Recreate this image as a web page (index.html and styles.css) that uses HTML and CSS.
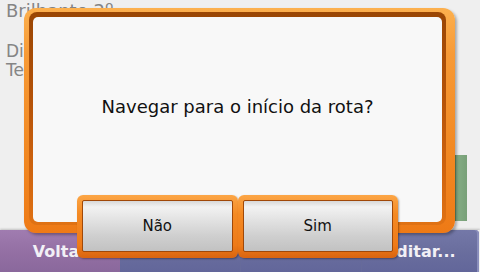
FILE: index.html
```html
<!DOCTYPE html>
<html>
<head>
<meta charset="utf-8">
<link rel="stylesheet" href="styles.css">
</head>
<body>
<div class="page">
  <div class="content">
    <div class="texts">
      <div class="title">Brilhante 2º</div>
      <div class="line">Distância</div>
      <div class="line">Tempo</div>
    </div>
    <div class="side">
      <div class="scroll"></div>
    </div>
  </div>
  <div class="bar">
    <div class="seg back">Voltar</div>
    <div class="seg blue first"></div>
    <div class="seg blue"></div>
    <div class="seg blue last">Editar...</div>
  </div>
</div>

<div class="dialog">
  <div class="frame">
    <div class="bevel">
      <div class="panel">
        <div class="msg">Navegar para o início da rota?</div>
      </div>
    </div>
  </div>
  <div class="buttons">
    <div class="btn"><div class="face">Não</div></div>
    <div class="btn"><div class="face">Sim</div></div>
  </div>
</div>
</body>
</html>
```

FILE: styles.css
```css
html, body {
  margin: 0;
  padding: 0;
}
body {
  width: 480px;
  height: 272px;
  overflow: hidden;
  background: #efefef;
  font-family: "DejaVu Sans", "Liberation Sans", sans-serif;
  position: relative;
}
.page {
  width: 480px;
  height: 272px;
  display: flex;
  flex-direction: column;
}
.content {
  flex: 1;
  display: flex;
}
.texts {
  flex: 1;
  padding: 0 0 0 6px;
  color: #858585;
}
.title {
  font-size: 18px;
  line-height: 22px;
}
.line {
  font-size: 17px;
  line-height: 19px;
}
.title + .line {
  margin-top: 20px;
}
.side {
  width: 25px;
}
.scroll {
  margin-top: 155px;
  width: 11px;
  height: 66px;
  background: linear-gradient(to right, #86ae86, #78a078);
  border-left: 1px solid #6a926a;
}
.bar {
  height: 42px;
  display: flex;
  box-shadow: 0 -1px 2px rgba(0,0,0,0.2);
}
.seg {
  display: flex;
  align-items: center;
  justify-content: center;
  color: #f2f0f6;
  font-weight: bold;
  font-size: 16px;
}
.back {
  width: 120px;
  background: linear-gradient(#a07cb0, #9470a4 50%, #8a689c);
}
.blue {
  width: 120px;
  background: linear-gradient(#7478a8, #6a6e9e 50%, #62669a);
  border-left: 1px solid #666a9a;
}
.first {
  border-left: none;
}
.last {
  width: 117px;
  border-radius: 0 4px 0 0;
  box-shadow: inset -2px 0 0 #8a8ebc;
}

.dialog {
  position: absolute;
  left: 24px;
  top: 8px;
  width: 431px;
}
.frame {
  height: 225px;
  box-sizing: border-box;
  padding: 4px 9px 8px 5px;
  border-radius: 12px;
  background: linear-gradient(#fcb04e, #f79a36 20%, #f28a24 60%, #ee7a16);
  box-shadow: 2px 2px 3px rgba(0,0,0,0.3);
}
.bevel {
  height: 100%;
  box-sizing: border-box;
  padding: 5px 4px 3px 4px;
  border-radius: 8px;
  background: linear-gradient(#9a4604, #b45208 40%, #d0640e 75%, #e07214);
}
.panel {
  height: 100%;
  box-sizing: border-box;
  background: #f8f8f8;
  border-radius: 5px;
  display: flex;
  align-items: center;
  justify-content: center;
  padding-bottom: 27px;
}
.msg {
  font-size: 18px;
  color: #111;
}
.buttons {
  display: flex;
  margin: -38px 0 0 53px;
  width: 321px;
  height: 63px;
}
.btn {
  flex: 1;
  box-sizing: border-box;
  padding: 5px 5px 6px 5px;
  border-radius: 6px;
  background: linear-gradient(#fca646, #f48a24 30%, #ee7a18 80%, #d86410);
  box-shadow: 1px 1px 2px rgba(0,0,0,0.35);
}
.face {
  height: 100%;
  box-sizing: border-box;
  border: 1px solid #a04808;
  border-radius: 2px;
  background: linear-gradient(#d8d8d8, #f2f2f2 12%, #e4e4e4 35%, #cfcfcf 70%, #c2c2c2);
  display: flex;
  align-items: center;
  justify-content: center;
  font-size: 15px;
  color: #111;
}
```
